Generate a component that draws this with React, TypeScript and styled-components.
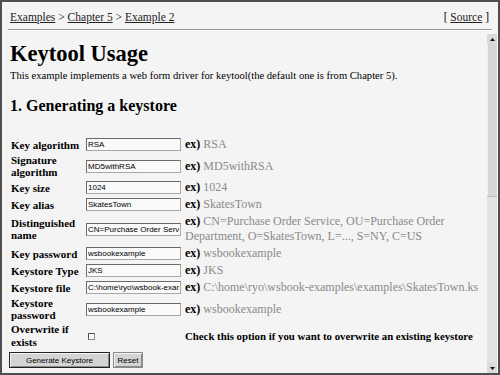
import React from 'react';
import styled, { createGlobalStyle } from 'styled-components';

const GlobalStyle = createGlobalStyle`
  body {
    margin: 0;
    background: #f3f3f3;
    font-family: 'Liberation Serif', 'Times New Roman', serif;
    color: #000;
  }
`;

const Frame = styled.div`
  width: 500px;
  height: 375px;
  box-sizing: border-box;
  border: 2px solid #4f4f4f;
  background: #f4f4f4;
  display: flex;
  flex-direction: column;
  overflow: hidden;
`;

const Header = styled.div`
  display: flex;
  justify-content: space-between;
  align-items: center;
  padding: 8px 9px 5px 8px;
  font-size: 11.5px;
  line-height: 14px;
`;

const Crumb = styled.a`
  color: #222;
  text-decoration: underline;
`;

const Rule = styled.div`
  margin: 0 6px;
  border-top: 1px solid #9a9a9a;
  border-bottom: 1px solid #fff;
`;

const Body = styled.div`
  flex: 1;
  display: flex;
  min-height: 0;
  padding-top: 3px;
`;

const Main = styled.div`
  flex: 1;
  overflow: hidden;
  padding: 0 0 0 8px;
  margin-top: -3px;
`;

const Scrollbar = styled.div`
  width: 10px;
  margin-right: 1px;
  display: flex;
  flex-direction: column;
  background: #e2e2e2;
`;

const ArrowButton = styled.div`
  height: 10px;
  display: flex;
  align-items: center;
  justify-content: center;
  background: #dadada;
`;

const Track = styled.div`
  flex: 1;
  display: flex;
  flex-direction: column;
`;

const Thumb = styled.div`
  height: 152px;
  background: #d6d6d6;
  border-bottom: 1px solid #bcbcbc;
  box-shadow: inset 1px 0 0 #f0f0f0;
`;

const Title = styled.h1`
  font-size: 22.5px;
  line-height: 26px;
  margin: 10px 0 2px;
`;

const Intro = styled.p`
  font-size: 10.6px;
  line-height: 13px;
  margin: 0 0 14px;
`;

const Section = styled.h2`
  font-size: 16px;
  line-height: 19px;
  margin: 0 0 21px;
`;

const FormTable = styled.table`
  border-collapse: collapse;
  border-spacing: 0;
`;

const Cell = styled.td<{ $w?: number }>`
  padding: 1px 0;
  vertical-align: middle;
  ${(p) => (p.$w ? `width: ${p.$w}px;` : '')}
`;

const Label = styled.div<{ $tall?: boolean }>`
  font-weight: bold;
  font-size: 11px;
  line-height: ${(p) => (p.$tall ? 13 : 12)}px;
  padding-left: 1px;
`;

const Field = styled.input`
  display: block;
  box-sizing: border-box;
  width: 95px;
  height: 13px;
  margin: 1px 0;
  padding: 0 1px;
  font-family: 'Liberation Sans', Arial, sans-serif;
  font-size: 8px;
  color: #000;
  background: #f9f9f9;
  border: 1px solid #a8a8a8;
  border-top-color: #6a6a6a;
  border-left-color: #6a6a6a;
  outline: none;
`;

const Check = styled.input`
  appearance: none;
  display: block;
  width: 7px;
  height: 7px;
  margin: 0 0 0 2px;
  border: 1px solid #8a8a8a;
  border-top-color: #555;
  border-left-color: #555;
  background: #fafafa;
`;

const Example = styled.div`
  padding-left: 4px;
  font-size: 12px;
  line-height: 15px;
  color: #8a8a8a;
`;

const Ex = styled.b`
  color: #000;
`;

const Note = styled.div`
  padding-left: 4px;
  font-weight: bold;
  font-size: 10.8px;
  line-height: 13px;
`;

const Buttons = styled.div`
  display: flex;
  gap: 3px;
  padding-top: 2px;
  margin-left: -1px;
`;

const Button = styled.button<{ $primary?: boolean }>`
  height: 16px;
  padding: 0;
  width: ${(p) => (p.$primary ? 101 : 30)}px;
  font-family: 'Liberation Sans', Arial, sans-serif;
  font-size: 8px;
  color: #000;
  background: #d4d4d4;
  border: 1px solid ${(p) => (p.$primary ? '#222' : '#8a8a8a')};
  box-shadow: inset 1px 1px 0 #f4f4f4, inset -1px -1px 0 #8a8a8a;
`;

type Row = { label: string; value: string; example?: string };

const rows: Row[] = [
  { label: 'Key algorithm', value: 'RSA', example: 'RSA' },
  { label: 'Signature algorithm', value: 'MD5withRSA', example: 'MD5withRSA' },
  { label: 'Key size', value: '1024', example: '1024' },
  { label: 'Key alias', value: 'SkatesTown', example: 'SkatesTown' },
  {
    label: 'Distinguished name',
    value: 'CN=Purchase Order Service, OU=Purchase Order Department',
    example: 'CN=Purchase Order Service, OU=Purchase Order Department, O=SkatesTown, L=..., S=NY, C=US',
  },
  { label: 'Key password', value: 'wsbookexample', example: 'wsbookexample' },
  { label: 'Keystore Type', value: 'JKS', example: 'JKS' },
  {
    label: 'Keystore file',
    value: 'C:\\home\\ryo\\wsbook-examples\\examples\\SkatesTown.ks',
    example: 'C:\\home\\ryo\\wsbook-examples\\examples\\SkatesTown.ks',
  },
  { label: 'Keystore password', value: 'wsbookexample', example: 'wsbookexample' },
];

const Arrow: React.FC<{ up?: boolean }> = ({ up }) => (
  <svg width="5" height="3" viewBox="0 0 5 3">
    <path d={up ? 'M0 3 L2.5 0 L5 3 Z' : 'M0 0 L2.5 3 L5 0 Z'} fill="#111" />
  </svg>
);

export default function App() {
  return (
    <Frame>
      <GlobalStyle />
      <Header>
        <span>
          <Crumb>Examples</Crumb> &gt; <Crumb>Chapter 5</Crumb> &gt; <Crumb>Example 2</Crumb>
        </span>
        <span>
          [ <Crumb>Source</Crumb> ]
        </span>
      </Header>
      <Rule />
      <Body>
        <Main>
          <Title>Keytool Usage</Title>
          <Intro>
            This example implements a web form driver for keytool(the default one is from Chapter 5).
          </Intro>
          <Section>1. Generating a keystore</Section>
          <form>
            <FormTable>
              <tbody>
                {rows.map((r) => (
                  <tr key={r.label}>
                    <Cell $w={76}>
                      <Label>{r.label}</Label>
                    </Cell>
                    <Cell $w={95}>
                      <Field type="text" defaultValue={r.value} readOnly />
                    </Cell>
                    <Cell>
                      <Example>
                        <Ex>ex)</Ex> {r.example}
                      </Example>
                    </Cell>
                  </tr>
                ))}
                <tr>
                  <Cell $w={76}>
                    <Label $tall>Overwrite if exists</Label>
                  </Cell>
                  <Cell $w={95}>
                    <Check type="checkbox" />
                  </Cell>
                  <Cell>
                    <Note>Check this option if you want to overwrite an existing keystore</Note>
                  </Cell>
                </tr>
              </tbody>
            </FormTable>
            <Buttons>
              <Button type="button" $primary>
                Generate Keystore
              </Button>
              <Button type="button">Reset</Button>
            </Buttons>
          </form>
        </Main>
        <Scrollbar>
          <ArrowButton>
            <Arrow up />
          </ArrowButton>
          <Track>
            <Thumb />
          </Track>
          <ArrowButton>
            <Arrow />
          </ArrowButton>
        </Scrollbar>
      </Body>
    </Frame>
  );
}
